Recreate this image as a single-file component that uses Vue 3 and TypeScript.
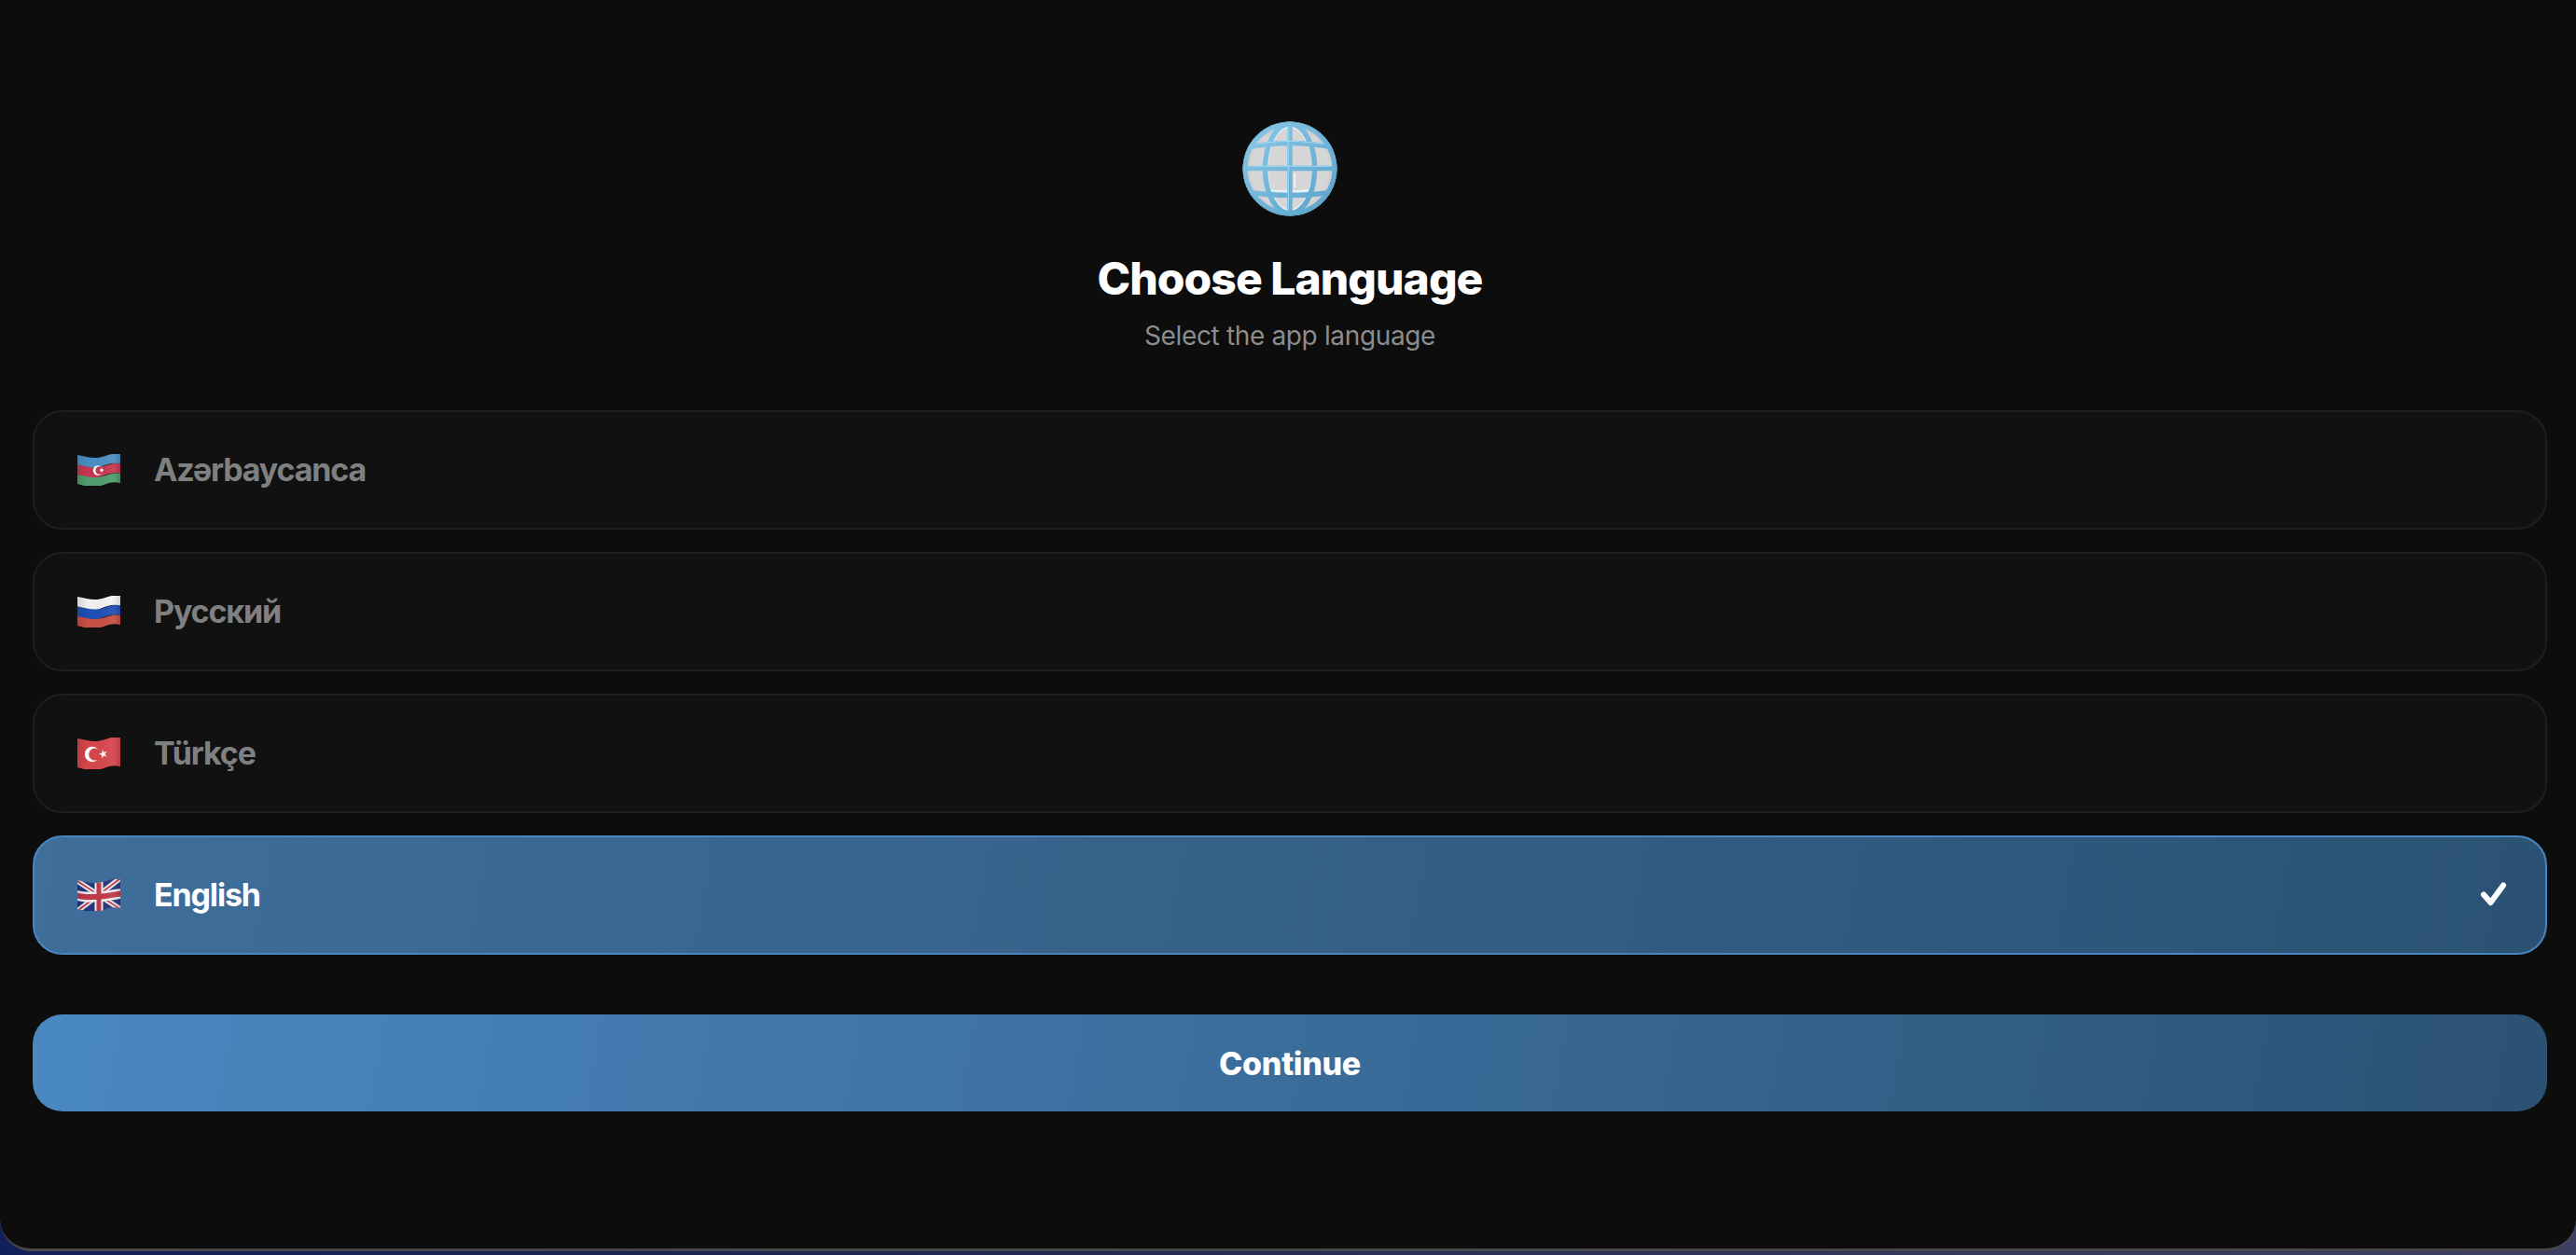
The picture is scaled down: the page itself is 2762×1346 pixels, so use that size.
<script setup lang="ts">
interface Language {
  code: string
  name: string
  selected?: boolean
}

const languages: Language[] = [
  { code: 'az', name: 'Azərbaycanca' },
  { code: 'ru', name: 'Русский' },
  { code: 'tr', name: 'Türkçe' },
  { code: 'en', name: 'English', selected: true },
]

// one wavy band of a flag, between two heights of the 46x32 box
function band(top: number, bottom: number): string {
  const edge = (y: number) => `C10 ${y + 2} 16 ${y + 4} 24 ${y + 2.5} S38 ${y - 3} 46 ${y - 1}`
  const back = (y: number) => `C38 ${y - 3} 32 ${y - 0.5} 24 ${y + 2.5} S8 ${y + 2} 0 ${y}`
  return `M0 ${top} ${edge(top)} L46 ${bottom - 1} ${back(bottom)} Z`
}
</script>

<template>
  <div class="window">
    <div class="header">
      <svg class="globe" viewBox="0 0 100 100">
        <defs>
          <clipPath id="globe-clip"><circle cx="50" cy="50" r="49.5" /></clipPath>
          <radialGradient id="globe-fill" cx="0.5" cy="0.5" r="0.55">
            <stop offset="0.75" stop-color="#d6d6d6" />
            <stop offset="1" stop-color="#b4b4b4" />
          </radialGradient>
          <linearGradient id="globe-bar" gradientUnits="userSpaceOnUse" x1="10" x2="90" y1="10" y2="90">
            <stop offset="0" stop-color="#86c6e6" />
            <stop offset="1" stop-color="#5ea6cd" />
          </linearGradient>
        </defs>
        <circle cx="50" cy="50" r="49.5" fill="url(#globe-fill)" />
        <g clip-path="url(#globe-clip)" fill="none">
          <ellipse cx="50" cy="50" rx="24" ry="44" stroke="#e4f2fa" stroke-width="2.6" />
          <path d="M55 55V70" stroke="#e4f2fa" stroke-width="2" />
          <path d="M26 72Q50 76 74 72" stroke="#e4f2fa" stroke-width="2.6" />
          <g stroke="url(#globe-bar)" stroke-width="5.4">
            <ellipse cx="50" cy="50" rx="26" ry="47" />
            <path d="M50 0V100" />
            <path d="M2 28Q50 18 98 28" />
            <path d="M0 49.5H100" />
            <path d="M2 74Q50 82 98 74" />
          </g>
          <g stroke="#a6d8f0" stroke-width="1">
            <path d="M48.3 4V96" />
            <path d="M2 47.3H98" />
            <path d="M4 26Q50 16 96 26" />
          </g>
          <circle cx="50" cy="50" r="47" stroke="url(#globe-bar)" stroke-width="5" />
          <circle cx="50" cy="50" r="49.5" stroke="#4f95bb" stroke-width="1" />
        </g>
      </svg>
      <h1 class="title">Choose Language</h1>
      <p class="subtitle">Select the app language</p>
    </div>

    <div class="list">
      <div
        v-for="lang in languages"
        :key="lang.code"
        class="row"
        :class="{ selected: lang.selected }"
      >
        <svg class="flag" viewBox="0 0 46 34">
          <defs>
            <clipPath :id="`wave-${lang.code}`"><path :d="band(1, 32)" /></clipPath>
            <linearGradient :id="`shade-${lang.code}`" x1="0" x2="1" y1="0" y2="0">
              <stop offset="0" stop-color="#000" stop-opacity="0.12" />
              <stop offset="0.25" stop-color="#000" stop-opacity="0" />
              <stop offset="0.8" stop-color="#fff" stop-opacity="0.06" />
              <stop offset="1" stop-color="#000" stop-opacity="0.14" />
            </linearGradient>
          </defs>
          <g v-if="lang.code === 'az'">
            <path :d="band(1, 11.5)" fill="#4a8fc4" />
            <path :d="band(11.5, 22)" fill="#c73650" />
            <path :d="band(22, 32)" fill="#4f9d6c" />
            <circle cx="22" cy="17.5" r="5.2" fill="#fff" />
            <circle cx="23.6" cy="17.5" r="4.2" fill="#c73650" />
            <circle cx="26" cy="17.2" r="1.7" fill="#fff" />
          </g>
          <g v-else-if="lang.code === 'ru'">
            <path :d="band(1, 11.5)" fill="#f1f1f1" />
            <path :d="band(11.5, 22)" fill="#1f4fb4" />
            <path :d="band(22, 32)" fill="#c94f42" />
          </g>
          <g v-else-if="lang.code === 'tr'">
            <path :d="band(1, 32)" fill="#d5464b" />
            <circle cx="16" cy="18" r="8.2" fill="#fff" />
            <circle cx="18.8" cy="18" r="6.6" fill="#d5464b" />
            <path d="M27 12.5l1.2 3.2 3.4-.6-2.2 2.7 2 2.8-3.2-1.1-2.1 2.7.1-3.4-3.2-1.2 3.3-1z" fill="#fff" />
          </g>
          <g v-else :clip-path="`url(#wave-${lang.code})`">
            <path :d="band(1, 32)" fill="#26367f" />
            <g stroke="#eee" stroke-width="5.5">
              <path d="M0 2L46 32" />
              <path d="M46 -1L0 34" />
            </g>
            <g stroke="#c0394a" stroke-width="1.8">
              <path d="M0 2L46 32" />
              <path d="M46 -1L0 34" />
            </g>
            <path d="M18.5 0H27.5V34H18.5Z" fill="#eee" />
            <path d="M0 12C12 15 30 13 46 10V21C30 24 12 26 0 23Z" fill="#eee" />
            <path d="M20.5 0H25.5V34H20.5Z" fill="#c0394a" />
            <path d="M0 14.5C12 17.5 30 15.5 46 12.5V18.5C30 21.5 12 23.5 0 20.5Z" fill="#c0394a" />
          </g>
          <path :d="band(1, 32)" :fill="`url(#shade-${lang.code})`" />
        </svg>
        <span class="name">{{ lang.name }}</span>
        <svg v-if="lang.selected" class="check" viewBox="0 0 30 30">
          <path d="M4 14.5L11.5 23L25 4.5" fill="none" stroke="#fff" stroke-width="6" stroke-linecap="round" stroke-linejoin="round" />
        </svg>
      </div>
    </div>

    <button class="continue">Continue</button>
  </div>
</template>

<style>
body {
  background: linear-gradient(90deg, #12205a 0%, #1d2450 30%, #34375c 75%, #3d4064 100%);
  height: 1346px;
  overflow: hidden;
}
</style>

<style scoped>
.window {
  box-sizing: border-box;
  height: 1342px;
  padding: 130px 31px 0 35px;
  background: #0d0d0d;
  border-bottom: 3px solid #48484c;
  border-radius: 0 0 34px 34px;
  font-family: Inter, "Noto Sans", sans-serif;
}

.header {
  display: flex;
  flex-direction: column;
  align-items: center;
}

.globe {
  width: 102px;
  height: 102px;
  margin-left: -1px;
}

.title {
  margin: 36px 0 0;
  font-size: 48px;
  line-height: 62px;
  font-weight: 800;
  letter-spacing: -0.95px;
  color: #fff;
}

.subtitle {
  margin: 12px 0 0;
  font-size: 28px;
  line-height: 36px;
  font-weight: 400;
  letter-spacing: -0.35px;
  color: #8c8c8c;
}

.list {
  display: flex;
  flex-direction: column;
  gap: 24px;
  margin-top: 62px;
}

.row {
  box-sizing: border-box;
  display: flex;
  align-items: center;
  height: 128px;
  padding: 0 40px 0 46px;
  background: #111111;
  border: 2px solid #1f1f1f;
  border-radius: 32px;
}

.row.selected {
  background: linear-gradient(100deg, #3f6e9b 0%, #2b5274 100%);
  border-color: #4a86be;
}

.flag {
  flex: none;
  width: 46px;
  height: 34px;
  margin-right: 36px;
}

.name {
  flex: 1;
  font-size: 34px;
  line-height: 40px;
  font-weight: 700;
  letter-spacing: -1.15px;
  color: #808080;
}

.selected .name {
  color: #fff;
}

.check {
  flex: none;
  width: 30px;
  height: 30px;
}

.continue {
  display: block;
  width: 100%;
  height: 104px;
  margin-top: 64px;
  padding: 0;
  background: linear-gradient(100deg, #4a88c2 0%, #2b5173 100%);
  border: none;
  border-radius: 32px;
  font-family: inherit;
  font-size: 34px;
  font-weight: 800;
  letter-spacing: -0.3px;
  color: #fff;
}
</style>
